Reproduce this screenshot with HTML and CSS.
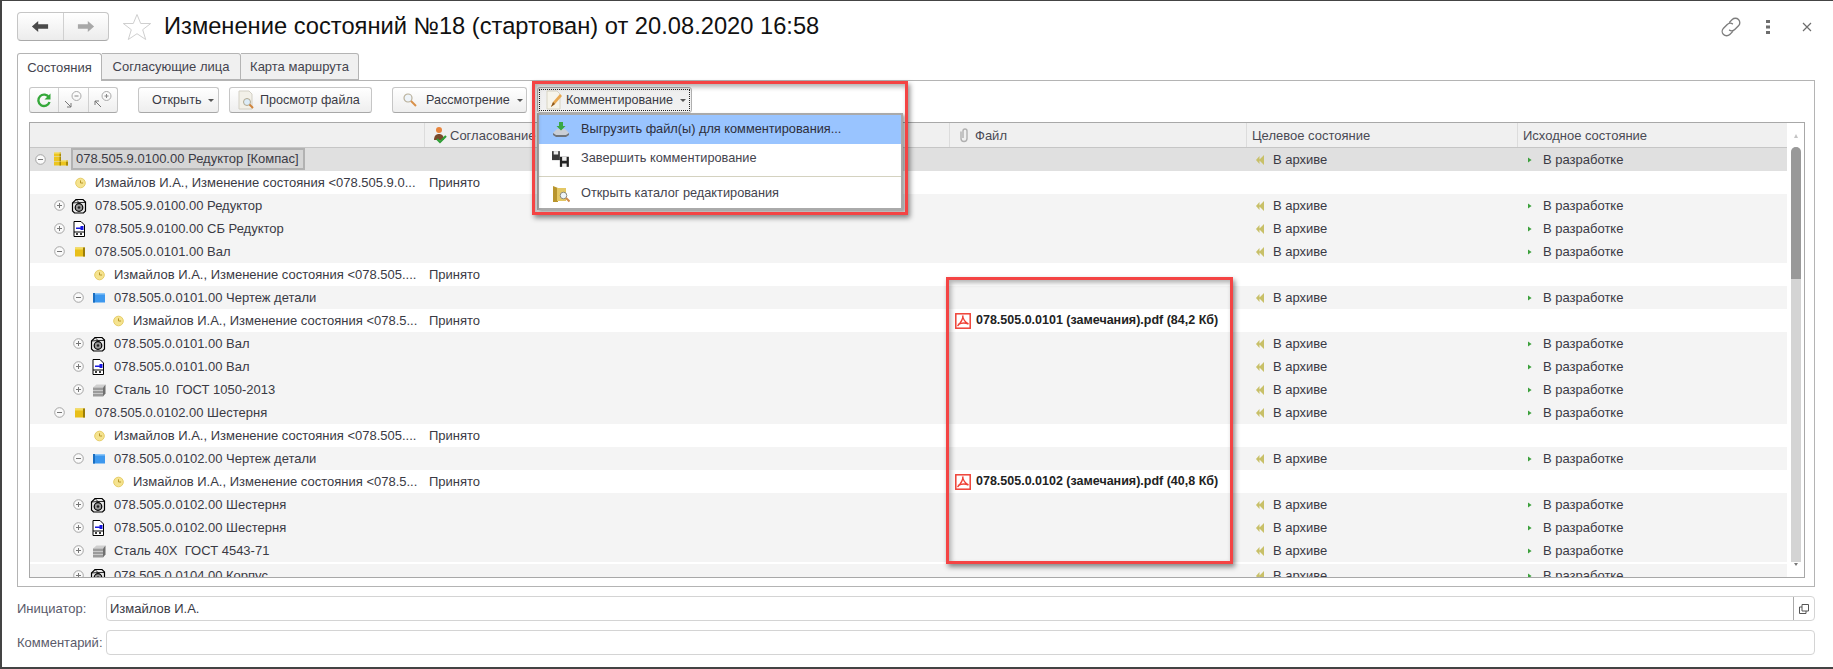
FILE: index.html
```html
<!DOCTYPE html>
<html lang="ru">
<head>
<meta charset="utf-8">
<title>Изменение состояний</title>
<link rel="stylesheet" href="styles.css">
</head>
<body>
<svg class="defs" width="0" height="0" aria-hidden="true">
  <symbol id="minus" viewBox="0 0 11 11"><circle cx="5.5" cy="5.5" r="4.8" fill="#fafafa" stroke="#a5a5a5"/><path d="M3 5.5h5" stroke="#777"/></symbol>
  <symbol id="plus" viewBox="0 0 11 11"><circle cx="5.5" cy="5.5" r="4.8" fill="#fafafa" stroke="#a5a5a5"/><path d="M3 5.5h5M5.5 3v5" stroke="#777"/></symbol>
  <symbol id="stack" viewBox="0 0 16 16"><path d="M2 .5h7v4H2zM2 5h7v4H2zM2 9.500h7v4H2zM9 8.500h7v5H9z" fill="#ecc51f"/><path d="M7.500 .5H9v4H7.500zM7.500 5H9v4H7.500zM14 8.500h2v5h-2zM7.500 9.500H9v4H7.500z" fill="#a88a08"/><path d="M2 .5h7v1H2zM9 8.500h7v1H9z" fill="#f8e784"/></symbol>
  <symbol id="clock" viewBox="0 0 16 16"><circle cx="9.500" cy="8" r="4.800" fill="#f5e38f" stroke="#e6cd68"/><path d="M9.500 5.400V8h2.600" fill="none" stroke="#b8962a"/></symbol>
  <symbol id="kompas" viewBox="0 0 16 16"><path d="M5 1.500h7l2.500 2.500v9l-2 2H3.500l-2-2V5z" fill="#e8e8e8" stroke="#000" stroke-width="1.200"/><path d="M5 1.500L8 4.500h6.500M8 4.500L1.500 5" fill="none" stroke="#000" stroke-width=".8"/><circle cx="8" cy="9.500" r="3.800" fill="#999" stroke="#000" stroke-width="1.200"/><circle cx="8" cy="9.500" r="1.300" fill="#222"/></symbol>
  <symbol id="doc" viewBox="0 0 16 16"><path d="M3 .5h7l3.500 3.500v11.500H3z" fill="#fff" stroke="#000"/><path d="M9.500 5h3v4h-3zM5 6.500h4.500V8H5z" fill="#1616e0"/><path d="M3 11h10.500" stroke="#000"/><path d="M5 13h2M9 13h2" stroke="#000" stroke-width="1.500"/></symbol>
  <symbol id="cube" viewBox="0 0 16 16"><path d="M4 3.500h10v9H4z" fill="#e8bf1a"/><path d="M12 3.500h2v9h-2z" fill="#9c7e08"/><path d="M4 3.500h8v2H4z" fill="#f4dc60"/></symbol>
  <symbol id="blue" viewBox="0 0 16 16"><path d="M3 3h12v9.500H3z" fill="#3d98ee"/><path d="M3 3h2v9.500H3z" fill="#1a6ec0"/><path d="M5 3h10v1.500H5z" fill="#8cc6f8"/></symbol>
  <symbol id="steel" viewBox="0 0 16 16"><path d="M3 5.500l3.500-3h9l-2.500 3z" fill="#cfcfcf"/><path d="M3 5.500h10v9H3z" fill="#9b9b9b"/><path d="M13 5.500l2.500-3v9l-2.500 3z" fill="#6f6f6f"/><path d="M3 8.500h10M3 11.500h10" stroke="#c8c8c8"/></symbol>
  <symbol id="pdf" viewBox="0 0 16 16"><rect x=".8" y=".8" width="14.400" height="14.400" fill="#fff" stroke="#ef4136" stroke-width="1.500"/><path d="M7.500 2.500c.5 3 2 6.500 6 8.500M8 2.500c0 3-2 7-5.500 10.500M3 11.500c3-1.500 7-2 10.500-.5" fill="none" stroke="#ef4136" stroke-width="1.400"/></symbol>
  <symbol id="target" viewBox="0 0 8 10"><path d="M3.500 1v8L0 5zM8 0v10L3 5z" fill="#c8c068"/></symbol>
  <symbol id="source" viewBox="0 0 5 8"><path d="M0 1l4.500 3L0 7z" fill="#3ca03c"/></symbol>
  <symbol id="doc-search" viewBox="0 0 20 20"><path d="M3 1h10l3 3v15H3z" fill="#f2f0e8" stroke="#d2cfc4"/><circle cx="11" cy="12" r="3.500" fill="#dcecf8" stroke="#b0a890"/><path d="M13.500 14.500l3.500 3.500" stroke="#d0843c" stroke-width="2"/></symbol>
  <symbol id="magnifier" viewBox="0 0 20 20"><circle cx="8" cy="8" r="4" fill="#eef4fa" stroke="#b9b09a" stroke-width="1.200"/><path d="M11 11l5 5" stroke="#d8914a" stroke-width="2"/></symbol>
  <symbol id="note" viewBox="0 0 20 20"><path d="M3 1h10l3 3v15H3z" fill="#f6f4ea" stroke="#d8d4c4"/><path d="M7 17l2-5 7-8 2 2-7 8z" fill="#e8a850"/><path d="M7 17l2-5 2 2z" fill="#8c5a20"/></symbol>
  <symbol id="drive" viewBox="0 0 18 18"><path d="M1 12l4-4h8l4 4v2l-3 2H4l-3-2z" fill="#c9ced6"/><path d="M1 12l3 2h10l3-2v2l-3 2H4l-3-2z" fill="#6c737c"/><path d="M7 1h4v4h2.500L9 9.500 4.500 5H7z" fill="#39a845"/></symbol>
  <symbol id="floppies" viewBox="0 0 16 16"><path d="M0 1h7v8H0z" fill="#3a3a3a"/><path d="M1.500 1h4v3h-4z" fill="#eee"/><path d="M7 6h8v9H7z" fill="#222"/><path d="M9 6h4v3.500H9zM9 12h4v3H9z" fill="#eee"/></symbol>
  <symbol id="folder" viewBox="0 0 18 18"><path d="M1 1l5 2v14H1z" fill="#b8942c"/><path d="M5 3h9v13H5z" fill="#e3c765"/><circle cx="11.500" cy="10.500" r="3.300" fill="#eef4fa" stroke="#8a8a80"/><path d="M14 13l3.500 3.500" stroke="#d08a48" stroke-width="2"/></symbol>
  <symbol id="clip" viewBox="0 0 10 16"><path d="M2 4.500v7a3 3 0 0 0 6 0V4a2 2 0 0 0-4 0v7" fill="none" stroke="#b0b0b0" stroke-width="1.400"/></symbol>
  <symbol id="approve" viewBox="0 0 18 18"><circle cx="8" cy="4" r="3" fill="#e8843c"/><path d="M3 14c0-4 2-6 5-6s5 2 5 6z" fill="#7a4a2a"/><path d="M6 13l3 3 6-6" fill="none" stroke="#2f9e36" stroke-width="2.200"/></symbol>
</svg>

<div class="window">
  <header class="head">
    <div class="nav">
      <button class="nav-btn"><svg class="nav-ic" viewBox="0 0 20 14"><path d="M1 7l7-6v3.500h11v5H8V13z" fill="#4a4a4a"/></svg></button>
      <button class="nav-btn"><svg class="nav-ic" viewBox="0 0 20 14"><path d="M19 7l-7-6v3.500H1v5h11V13z" fill="#a8a8a8"/></svg></button>
    </div>
    <svg class="star" viewBox="0 0 30 28"><path d="M15 1.500l3.700 9h10l-8 6.200 3 9.800-8.700-5.800-8.700 5.800 3-9.800-8-6.200h10z" fill="#fff" stroke="#cfcfcf"/></svg>
    <h1 class="title">Изменение состояний №18 (стартован) от 20.08.2020 16:58</h1>
    <div class="win-tools">
      <svg class="link-ic" viewBox="2 2 16 16"><path d="M8.500 6.500l2.500-2.500a3.500 3.500 0 0 1 5 5l-3 3a3.500 3.500 0 0 1-4.500.3M11.500 13.500L9 16a3.500 3.500 0 0 1-5-5l3-3a3.500 3.500 0 0 1 4.500-.3" fill="none" stroke="#7d7d7d" stroke-width="1.100"/></svg>
      <svg class="dots-ic" viewBox="0 0 4 14"><path d="M0 0h4v3H0zM0 5.500h4v3H0zM0 11h4v3H0z" fill="#6d6d6d"/></svg>
      <svg class="close-ic" viewBox="0 0 10 10"><path d="M1 1l8 8M9 1l-8 8" stroke="#6d6d6d" stroke-width="1.200"/></svg>
    </div>
  </header>

  <nav class="tabs">
    <div class="tab tab-active tab-a">Состояния</div>
    <div class="tab tab-b">Согласующие лица</div>
    <div class="tab tab-c">Карта маршрута</div>
  </nav>

  <section class="panel">
    <div class="toolbar">
      <div class="group">
        <button class="g-btn"><svg class="ref-ic" viewBox="0 0 16 16"><path d="M13 5.500A5.700 5.700 0 1 0 13.500 10" fill="none" stroke="#35a83a" stroke-width="2.400"/><path d="M14.500 1.500v6h-6z" fill="#35a83a"/></svg></button>
        <button class="g-btn"><svg class="zoom-ic" viewBox="0 0 20 20"><circle cx="13.500" cy="6" r="4.500" fill="none" stroke="#aaa"/><path d="M11.500 6h4" stroke="#888"/><path d="M2 11l6 6M8 13v4H4" fill="none" stroke="#777"/></svg></button>
        <button class="g-btn"><svg class="zoom-ic" viewBox="0 0 20 20"><circle cx="13.500" cy="6" r="4.500" fill="none" stroke="#aaa"/><path d="M11.500 6h4M13.500 4v4" stroke="#888"/><path d="M8 17l-6-6M2 15v-4h4" fill="none" stroke="#777"/></svg></button>
      </div>
      <button class="btn b-open">Открыть<i class="caret"></i></button>
      <button class="btn b-view"><svg class="btn-ic"><use href="#doc-search"/></svg>Просмотр файла</button>
      <button class="btn b-review"><svg class="btn-ic"><use href="#magnifier"/></svg>Рассмотрение<i class="caret"></i></button>
      <button class="btn b-comment"><svg class="btn-ic"><use href="#note"/></svg>Комментирование<i class="caret"></i></button>
    </div>

    <div class="table">
      <div class="table-body">
        <div class="row head-row">
          <div class="hc"></div>
          <div class="hc hc-approve"><svg class="h-ic"><use href="#approve"/></svg>Согласование</div>
          <div class="hc hc-file"><svg class="clip-ic"><use href="#clip"/></svg>Файл</div>
          <div class="hc hc-plain">Целевое состояние</div>
          <div class="hc hc-plain">Исходное состояние</div>
        </div>

        <div class="row selected">
          <div class="tree l0"><svg class="tg"><use href="#minus"/></svg><svg class="ic"><use href="#stack"/></svg><span class="sel-text">078.505.9.0100.00 Редуктор [Компас]</span></div>
          <div class="c"></div><div class="c"></div>
          <div class="c st"><svg class="t-ic"><use href="#target"/></svg>В архиве</div>
          <div class="c su"><svg class="s-ic"><use href="#source"/></svg>В разработке</div>
        </div>
        <div class="row white">
          <div class="tree l1"><span class="tg"></span><svg class="ic"><use href="#clock"/></svg>Измайлов И.А., Изменение состояния &lt;078.505.9.0...</div>
          <div class="c pr">Принято</div><div class="c"></div><div class="c"></div><div class="c"></div>
        </div>
        <div class="row">
          <div class="tree l1"><svg class="tg"><use href="#plus"/></svg><svg class="ic"><use href="#kompas"/></svg>078.505.9.0100.00 Редуктор</div>
          <div class="c"></div><div class="c"></div>
          <div class="c st"><svg class="t-ic"><use href="#target"/></svg>В архиве</div>
          <div class="c su"><svg class="s-ic"><use href="#source"/></svg>В разработке</div>
        </div>
        <div class="row">
          <div class="tree l1"><svg class="tg"><use href="#plus"/></svg><svg class="ic"><use href="#doc"/></svg>078.505.9.0100.00 СБ Редуктор</div>
          <div class="c"></div><div class="c"></div>
          <div class="c st"><svg class="t-ic"><use href="#target"/></svg>В архиве</div>
          <div class="c su"><svg class="s-ic"><use href="#source"/></svg>В разработке</div>
        </div>
        <div class="row">
          <div class="tree l1"><svg class="tg"><use href="#minus"/></svg><svg class="ic"><use href="#cube"/></svg>078.505.0.0101.00 Вал</div>
          <div class="c"></div><div class="c"></div>
          <div class="c st"><svg class="t-ic"><use href="#target"/></svg>В архиве</div>
          <div class="c su"><svg class="s-ic"><use href="#source"/></svg>В разработке</div>
        </div>
        <div class="row white">
          <div class="tree l2"><span class="tg"></span><svg class="ic"><use href="#clock"/></svg>Измайлов И.А., Изменение состояния &lt;078.505....</div>
          <div class="c pr">Принято</div><div class="c"></div><div class="c"></div><div class="c"></div>
        </div>
        <div class="row">
          <div class="tree l2"><svg class="tg"><use href="#minus"/></svg><svg class="ic"><use href="#blue"/></svg>078.505.0.0101.00 Чертеж детали</div>
          <div class="c"></div><div class="c"></div>
          <div class="c st"><svg class="t-ic"><use href="#target"/></svg>В архиве</div>
          <div class="c su"><svg class="s-ic"><use href="#source"/></svg>В разработке</div>
        </div>
        <div class="row white">
          <div class="tree l3"><span class="tg"></span><svg class="ic"><use href="#clock"/></svg>Измайлов И.А., Изменение состояния &lt;078.5...</div>
          <div class="c pr">Принято</div>
          <div class="c fl"><svg class="pdf-ic"><use href="#pdf"/></svg>078.505.0.0101 (замечания).pdf (84,2 Кб)</div>
          <div class="c"></div><div class="c"></div>
        </div>
        <div class="row">
          <div class="tree l2"><svg class="tg"><use href="#plus"/></svg><svg class="ic"><use href="#kompas"/></svg>078.505.0.0101.00 Вал</div>
          <div class="c"></div><div class="c"></div>
          <div class="c st"><svg class="t-ic"><use href="#target"/></svg>В архиве</div>
          <div class="c su"><svg class="s-ic"><use href="#source"/></svg>В разработке</div>
        </div>
        <div class="row">
          <div class="tree l2"><svg class="tg"><use href="#plus"/></svg><svg class="ic"><use href="#doc"/></svg>078.505.0.0101.00 Вал</div>
          <div class="c"></div><div class="c"></div>
          <div class="c st"><svg class="t-ic"><use href="#target"/></svg>В архиве</div>
          <div class="c su"><svg class="s-ic"><use href="#source"/></svg>В разработке</div>
        </div>
        <div class="row">
          <div class="tree l2"><svg class="tg"><use href="#plus"/></svg><svg class="ic"><use href="#steel"/></svg>Сталь 10 &nbsp;ГОСТ 1050-2013</div>
          <div class="c"></div><div class="c"></div>
          <div class="c st"><svg class="t-ic"><use href="#target"/></svg>В архиве</div>
          <div class="c su"><svg class="s-ic"><use href="#source"/></svg>В разработке</div>
        </div>
        <div class="row">
          <div class="tree l1"><svg class="tg"><use href="#minus"/></svg><svg class="ic"><use href="#cube"/></svg>078.505.0.0102.00 Шестерня</div>
          <div class="c"></div><div class="c"></div>
          <div class="c st"><svg class="t-ic"><use href="#target"/></svg>В архиве</div>
          <div class="c su"><svg class="s-ic"><use href="#source"/></svg>В разработке</div>
        </div>
        <div class="row white">
          <div class="tree l2"><span class="tg"></span><svg class="ic"><use href="#clock"/></svg>Измайлов И.А., Изменение состояния &lt;078.505....</div>
          <div class="c pr">Принято</div><div class="c"></div><div class="c"></div><div class="c"></div>
        </div>
        <div class="row">
          <div class="tree l2"><svg class="tg"><use href="#minus"/></svg><svg class="ic"><use href="#blue"/></svg>078.505.0.0102.00 Чертеж детали</div>
          <div class="c"></div><div class="c"></div>
          <div class="c st"><svg class="t-ic"><use href="#target"/></svg>В архиве</div>
          <div class="c su"><svg class="s-ic"><use href="#source"/></svg>В разработке</div>
        </div>
        <div class="row white">
          <div class="tree l3"><span class="tg"></span><svg class="ic"><use href="#clock"/></svg>Измайлов И.А., Изменение состояния &lt;078.5...</div>
          <div class="c pr">Принято</div>
          <div class="c fl"><svg class="pdf-ic"><use href="#pdf"/></svg>078.505.0.0102 (замечания).pdf (40,8 Кб)</div>
          <div class="c"></div><div class="c"></div>
        </div>
        <div class="row">
          <div class="tree l2"><svg class="tg"><use href="#plus"/></svg><svg class="ic"><use href="#kompas"/></svg>078.505.0.0102.00 Шестерня</div>
          <div class="c"></div><div class="c"></div>
          <div class="c st"><svg class="t-ic"><use href="#target"/></svg>В архиве</div>
          <div class="c su"><svg class="s-ic"><use href="#source"/></svg>В разработке</div>
        </div>
        <div class="row">
          <div class="tree l2"><svg class="tg"><use href="#plus"/></svg><svg class="ic"><use href="#doc"/></svg>078.505.0.0102.00 Шестерня</div>
          <div class="c"></div><div class="c"></div>
          <div class="c st"><svg class="t-ic"><use href="#target"/></svg>В архиве</div>
          <div class="c su"><svg class="s-ic"><use href="#source"/></svg>В разработке</div>
        </div>
        <div class="row">
          <div class="tree l2"><svg class="tg"><use href="#plus"/></svg><svg class="ic"><use href="#steel"/></svg>Сталь 40Х &nbsp;ГОСТ 4543-71</div>
          <div class="c"></div><div class="c"></div>
          <div class="c st"><svg class="t-ic"><use href="#target"/></svg>В архиве</div>
          <div class="c su"><svg class="s-ic"><use href="#source"/></svg>В разработке</div>
        </div>
        <div class="row last">
          <div class="tree l2"><svg class="tg"><use href="#plus"/></svg><svg class="ic"><use href="#kompas"/></svg>078.505.0.0104.00 Корпус</div>
          <div class="c"></div><div class="c"></div>
          <div class="c st"><svg class="t-ic"><use href="#target"/></svg>В архиве</div>
          <div class="c su"><svg class="s-ic"><use href="#source"/></svg>В разработке</div>
        </div>
      </div>

      <div class="scroll">
        <i class="arrow-up"></i>
        <div class="track"><div class="thumb"></div></div>
        <i class="arrow-down"></i>
      </div>
    </div>
  </section>

  <div class="form">
    <label class="f-label">Инициатор:</label>
    <div class="input"><span class="f-value">Измайлов И.А.</span><span class="open-btn"><svg class="open-ic" viewBox="0 0 10 10"><path d="M3 .5h6.500V7H3zM3 3H.5v6.500H7V7" fill="none" stroke="#555"/></svg></span></div>
    <label class="f-label">Комментарий:</label>
    <div class="input"></div>
  </div>

  <div class="menu">
    <div class="m-item m-hover"><svg class="m-ic"><use href="#drive"/></svg>Выгрузить файл(ы) для комментирования...</div>
    <div class="m-item"><svg class="m-ic"><use href="#floppies"/></svg>Завершить комментирование</div>
    <div class="m-sep"></div>
    <div class="m-item"><svg class="m-ic"><use href="#folder"/></svg>Открыть каталог редактирования</div>
  </div>
  <div class="mark mark-menu"></div>
  <div class="mark mark-files"></div>
</div>
</body>
</html>
```

FILE: styles.css
```css
* { box-sizing: border-box; }
html, body { margin: 0; padding: 0; }
body { font: 13px/1 "Liberation Sans", Arial, sans-serif; color: #3a3a44; background: #fff; overflow: hidden; }
.defs { display: block; position: absolute; }
svg { display: block; flex: none; }
button { font: inherit; color: inherit; margin: 0; padding: 0; }

.window { position: relative; width: 1833px; height: 669px; border: solid #444; border-width: 1px 0 2px 2px; padding: 11px 18px 0 15px; background: #fff; }

.head { display: flex; align-items: center; height: 29px; margin-bottom: 12px; }
.nav { display: flex; width: 92px; height: 29px; border: 1px solid #c6c6c6; border-bottom-color: #aaa; border-radius: 4px; background: linear-gradient(#fff, #ececec); }
.nav-btn { flex: 1; display: flex; align-items: center; justify-content: center; border: 0; background: none; }
.nav-btn + .nav-btn { border-left: 1px solid #d0d0d0; }
.nav-ic { width: 18px; height: 13px; }
.star { width: 30px; height: 28px; margin-left: 13px; }
.title { margin: 0 0 0 12px; font-size: 23.700px; font-weight: 400; color: #111; white-space: nowrap; }
.win-tools { display: flex; align-items: center; margin-left: auto; }
.link-ic { width: 20px; height: 20px; }
.dots-ic { width: 4px; height: 14px; margin-left: 25px; }
.close-ic { width: 10px; height: 10px; margin: 0 3px 0 32px; }

.tabs { display: flex; height: 27px; position: relative; z-index: 1; }
.tab { display: flex; align-items: center; justify-content: center; border: 1px solid #b4b4b4; border-left-width: 0; border-radius: 0 3px 0 0; background: #f0f0f0; color: #44444e; height: 27px; }
.tab-active { border-left-width: 1px; border-radius: 3px 3px 0 0; background: #fff; height: 28px; border-bottom: 0; }
.tab-a { width: 85px; }
.tab-b { width: 139px; }
.tab-c { width: 118px; }

.panel { height: 507px; border: 1px solid #b4b4b4; padding: 6px 9px 8px 11px; }
.toolbar { display: flex; height: 26px; margin-bottom: 9px; font-size: 12.600px; }
.group { display: flex; width: 89px; border: 1px solid #c6c6c6; border-bottom-color: #a8a8a8; border-radius: 3px; background: linear-gradient(#fff, #eeeeee); }
.g-btn { flex: 1; display: flex; align-items: center; justify-content: center; border: 0; background: none; }
.g-btn + .g-btn { border-left: 1px solid #d0d0d0; }
.ref-ic { width: 16px; height: 16px; }
.zoom-ic { width: 20px; height: 20px; }
.btn { display: flex; align-items: center; height: 26px; border: 1px solid #c6c6c6; border-bottom-color: #a8a8a8; border-radius: 3px; background: linear-gradient(#fff, #eeeeee); padding: 0; white-space: nowrap; }
.btn-ic { width: 20px; height: 20px; margin-right: 6px; }
.caret { width: 0; height: 0; margin-left: 7px; border: 3px solid transparent; border-top: 3px solid #555; border-bottom: 0; }
.b-open { width: 81px; margin-left: 20px; padding-left: 13px; }
.b-view { width: 143px; margin-left: 10px; padding-left: 6px; }
.b-view .btn-ic { margin-right: 4px; }
.b-review { width: 135px; margin-left: 20px; padding-left: 7px; }
.b-comment { width: 155px; margin-left: 10px; padding-left: 6px; background: linear-gradient(#eeeeee, #f2f2f2); outline: 1px dotted #222; outline-offset: -3px; border-color: #b0b0b0; }
.b-comment .btn-ic { margin-right: 2px; }

.table { display: flex; height: 456px; border: 1px solid #a8a8a8; overflow: hidden; }
.table-body { flex: 1; min-width: 0; }
.row { display: grid; grid-template-columns: 394px 525px 297px 271px 270px; height: 23px; background: #f4f4f4; align-items: stretch; }
.head-row { height: 25px; background: #f0f0f0; border-bottom: 1px solid #c6c6c6; }
.selected { background: #e0e0e0; }
.white { background: #fff; }
.last { margin-top: 2px; }

.hc { display: flex; align-items: center; border-left: 1px solid #dcdcdc; color: #4a4a54; }
.hc:first-child { border-left: 0; }
.hc-approve { padding-left: 6px; }
.h-ic { width: 18px; height: 18px; margin-right: 1px; }
.hc-file { padding-left: 9px; }
.clip-ic { width: 10px; height: 16px; margin-right: 6px; }
.hc-plain { padding-left: 5px; }

.tree, .c { display: flex; align-items: center; white-space: nowrap; overflow: hidden; }
.tg { width: 11px; height: 11px; }
.ic { width: 16px; height: 16px; margin: 0 8px 0 6px; }
.l0 { padding-left: 5px; }
.l1 { padding-left: 24px; }
.l2 { padding-left: 43px; }
.l3 { padding-left: 62px; }
.sel-text { display: block; height: 22px; line-height: 18px; margin-left: -5px; padding: 0 4px 0 3px; background: #d6d6d6; border: 2px solid #b2b2b2; align-self: flex-start; }
.pr { padding-left: 5px; }
.st { padding-left: 10px; }
.t-ic { width: 8px; height: 10px; margin-right: 9px; }
.su { padding-left: 11px; }
.s-ic { width: 4px; height: 8px; margin-right: 11px; }
.fl { padding-left: 6px; font-weight: 700; font-size: 12.500px; color: #222; }
.pdf-ic { width: 16px; height: 16px; margin-right: 5px; }

.scroll { display: flex; flex-direction: column; align-items: center; width: 17px; background: #fff; }
.arrow-up { width: 0; height: 0; margin-top: 11px; border: 2.500px solid transparent; border-bottom: 4px solid #c4c4c4; border-top: 0; }
.track { width: 10px; height: 415px; margin-top: 9px; background: #d4d4d4; border-radius: 5px 5px 0 0; }
.thumb { height: 132px; background: #999; border-radius: 5px 5px 0 0; }
.arrow-down { width: 0; height: 0; margin-top: 1px; border: 2px solid transparent; border-top: 3px solid #777; border-bottom: 0; }

.form { display: grid; grid-template-columns: 89px 1fr; grid-auto-rows: 25px; row-gap: 9px; margin: 9px 0 0 0; align-items: center; }
.f-label { color: #5a5a6a; }
.input { display: flex; align-items: center; height: 25px; border: 1px solid #d4d4d4; border-radius: 4px; background: #fff; }
.f-value { flex: 1; padding-left: 3px; }
.open-btn { display: flex; align-items: center; justify-content: center; width: 21px; height: 23px; border-left: 1px solid #aaa; }
.open-ic { width: 10px; height: 10px; }

.menu { position: absolute; left: 535px; top: 112px; width: 366px; height: 97px; background: #fff; border: 2px solid #aaa; box-shadow: 2px 2px 3px rgba(0,0,0,.35); font-size: 12.750px; }
.m-item { display: flex; align-items: center; height: 29px; padding-left: 13px; color: #44444e; white-space: nowrap; }
.m-hover { background: #99c4ff; color: #2e2e3a; }
.m-ic { width: 18px; height: 18px; margin-right: 11px; }
.m-sep { height: 1px; margin: 3px 0 2px; background: #d4d2c0; }

.mark { position: absolute; border: 3.500px solid #f44444; box-shadow: 2px 3px 5px rgba(0,0,0,.45), inset 2px 3px 5px rgba(0,0,0,.3); }
.mark-menu { left: 530px; top: 80px; width: 376px; height: 134px; }
.mark-files { left: 944px; top: 276px; width: 287px; height: 287px; }
```
